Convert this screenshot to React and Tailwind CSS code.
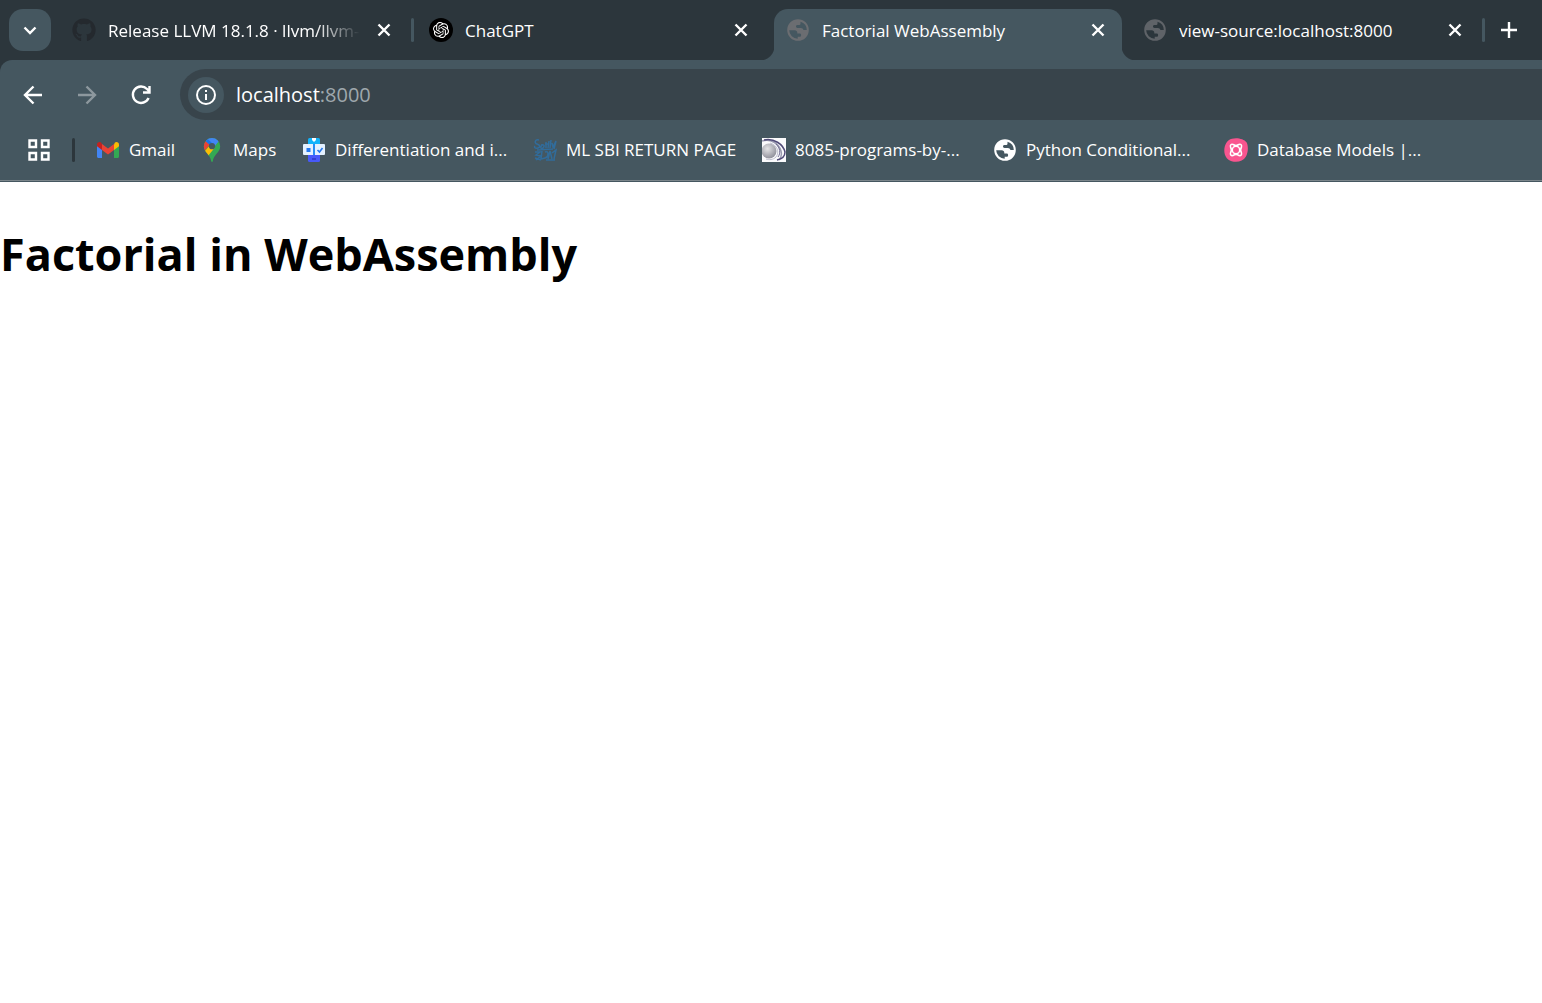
import { FaGithub } from "react-icons/fa";
import { SiOpenai } from "react-icons/si";

function Globe({ className }) {
  return (
    <svg viewBox="0 0 24 24" className={`size-6 shrink-0 ${className}`} aria-hidden="true">
      <path
        fillRule="evenodd"
        d="M12 1.200a10.800 10.800 0 1 0 0 21.600 10.800 10.800 0 0 0 0-21.600zM14.500 3.700a8.800 8.800 0 0 1 6.300 8.300h-3.300c-.5-1.300-1.200-2-2.600-2h-3.400c-.9 0-1.500-.6-1.500-1.400 0-1 .6-1.500 1.600-1.500h1.200c1.100 0 1.700-.7 1.700-1.700zM3.200 12.300h5.500c1.600 0 2.600.9 2.600 2.500v.700h2.200c1.200 0 1.600.7 1.600 1.700 0 1-.6 1.500-1.600 1.500h-1.800v2.100a8.800 8.800 0 0 1-8.500-8.500z"
        fill="currentColor"
      />
    </svg>
  );
}

function Gmail() {
  return (
    <svg viewBox="0 0 24 24" className="size-6 shrink-0" aria-hidden="true">
      <path d="M1 7v11.500c0 .8.700 1.500 1.500 1.500H6V10z" fill="#4285f4" />
      <path d="M23 7v11.500c0 .8-.7 1.500-1.500 1.500H18V10z" fill="#34a853" />
      <path d="M18 6.500V12l5-3.700V6.500c0-2.200-2.400-3.200-4.100-2z" fill="#fbbc04" />
      <path d="M6 12V6l6 4.500L18 6v6l-6 4.500z" fill="#ea4335" />
      <path d="M1 6.500v1.800L6 12V6.300L5.100 4.500C3.400 3.200 1 4.300 1 6.500z" fill="#c5221f" />
    </svg>
  );
}

function Maps() {
  return (
    <svg viewBox="0 0 24 24" className="size-6 shrink-0" aria-hidden="true">
      <clipPath id="pin">
        <path d="M12 0a8.200 8.200 0 0 0-8.200 8.200c0 6.200 6.700 8.300 7.400 15 .1 1 1.500 1 1.600 0 .7-6.700 7.400-8.800 7.400-15A8.200 8.200 0 0 0 12 0z" />
      </clipPath>
      <g clipPath="url(#pin)">
        <path d="M0 0h24v24H0z" fill="#34a853" />
        <path d="M5.700 3 10 6.500 4 13.500 1 8z" fill="#ea4335" />
        <path d="M5.500 3 9-1h6l4 4-5 6-4-2.500z" fill="#4285f4" />
        <path d="M5.500 3 7.700 1 12 5l-2.200 2z" fill="#1a73e8" />
        <path d="M4 14 9.700 7.500 14.500 10 8 18z" fill="#fbbc04" />
      </g>
      <circle cx="12" cy="8.200" r="3.100" fill="#455760" />
    </svg>
  );
}

function Robot() {
  return (
    <svg viewBox="0 0 24 24" className="size-6 shrink-0" aria-hidden="true">
      <rect x="6" y="0" width="12" height="8" rx="1.500" fill="#12b4fb" />
      <rect x="6" y="15" width="12" height="9" rx="1.500" fill="#4759fa" />
      <path d="M10 0h4v2l-2 2-2-2z" fill="#fff" />
      <rect x="1" y="6" width="22" height="11" rx="1" fill="#e4f1ff" />
      <path d="M11 6h2v11h-2z" fill="#288df5" />
      <rect x="4.500" y="10" width="4" height="4" fill="#2478ef" />
      <path d="m15.500 12 2 2 3-4" fill="none" stroke="#2478ef" strokeWidth="1.600" />
      <path d="M10 20h4v2h-4z" fill="#343fd4" />
    </svg>
  );
}

function Scribble() {
  return (
    <svg viewBox="0 0 24 24" className="size-6 shrink-0" fill="none" stroke="#316c9b" strokeWidth="1.500" aria-hidden="true">
      <path d="M6 2C2 1 1 5 4 6s4 3 1 4-4-1-3-2M8 7c3-1 4 1 2 3s-3-1-1-3M13 4v6M12 6h3M16 3l-1 7M18 2l-1 8M19 5l1 4 3-6-2 8M2 14h5l-4 3 5 1-5 4M9 13l-1 8 4-1M12 14c4-2 4 5 0 6M15 21l2-8 2 8M19 15l4-3-2 9M2 20l6 2M4 12l16-1M13 22h9" />
    </svg>
  );
}

function Rings() {
  return (
    <svg viewBox="0 0 24 24" className="size-6 shrink-0" aria-hidden="true">
      <defs>
        <radialGradient id="orb" cx=".4" cy=".35" r=".7">
          <stop offset="0" stopColor="#e4e4e6" />
          <stop offset="1" stopColor="#8d8d98" />
        </radialGradient>
      </defs>
      <path d="M0 0h24v24H0z" fill="#fafafc" />
      <circle cx="7" cy="13" r="7.500" fill="url(#orb)" />
      <g fill="none">
        <path d="M0 3c9-3 17 3 19 10 1 4 0 7-2 9" stroke="#9a9ab0" strokeWidth="1.500" />
        <path d="M2 2c10-2 19 4 21 12 0 4-3 7-8 8" stroke="#514b78" strokeWidth="1.500" />
        <path d="M8 5c7 2 10 9 6 14-3 3-7 3-10 2" stroke="#c0c0cf" />
        <path d="M14 6c4 4 5 9 2 13" stroke="#6f6b91" />
      </g>
    </svg>
  );
}

function Blossom() {
  return (
    <svg viewBox="0 0 24 24" className="size-6 shrink-0" aria-hidden="true">
      <path d="M8 .8c5-1.500 12 .2 14.500 3.500 2 3.500 1.800 10-.7 14.500-2.300 4-7.300 5.600-12 4.900C4 23 .3 18.500.3 12.700.3 7 3 2 8 .8z" fill="#f9558f" />
      <g fill="none" stroke="#fff" strokeWidth="1.500">
        <circle cx="12" cy="12" r="3.700" />
        <path d="M9 6.500c2 1.200 4 1.200 6 0 1.800-.6 3 .7 2.500 2.500-1.200 2-1.200 4 0 6 .5 1.800-.7 3-2.500 2.500-2-1.200-4-1.200-6 0-1.800.5-3-.7-2.500-2.500 1.200-2 1.200-4 0-6C6 7.200 7.200 5.900 9 6.500z" />
      </g>
    </svg>
  );
}

function Stroke({ d, className, width = 2 }) {
  return (
    <svg viewBox="0 0 24 24" className={`size-6 shrink-0 ${className || ""}`} fill="none" stroke="currentColor" strokeWidth={width} aria-hidden="true">
      <path d={d} />
    </svg>
  );
}

const tabs = [
  { title: "Release LLVM 18.1.8 · llvm/llvm-", icon: <FaGithub className="size-6 shrink-0 text-[#24292e]" />, fade: true, divider: true },
  {
    title: "ChatGPT",
    icon: (
      <span className="flex size-6 shrink-0 items-center justify-center rounded-full bg-black text-white">
        <SiOpenai className="size-4" />
      </span>
    ),
  },
  { title: "Factorial WebAssembly", icon: <Globe className="text-[#6b6d71]" />, active: true },
  { title: "view-source:localhost:8000", icon: <Globe className="text-[#5f6368]" />, divider: true },
];

const bookmarks = [
  { title: "Gmail", icon: <Gmail />, width: "w-[104px]" },
  { title: "Maps", icon: <Maps />, width: "w-[102px]" },
  { title: "Differentiation and i...", icon: <Robot />, width: "w-[231px]" },
  { title: "ML SBI RETURN PAGE", icon: <Scribble />, width: "w-[229px]" },
  { title: "8085-programs-by-...", icon: <Rings />, width: "w-[231px]" },
  { title: "Python Conditional...", icon: <Globe className="text-white" />, width: "w-[231px]" },
  { title: "Database Models |...", icon: <Blossom />, width: "w-[231px]" },
];

function Tab({ title, icon, active, fade, divider }) {
  return (
    <div className={`relative mr-[9px] flex h-[51px] w-[348px] min-w-0 items-center gap-3 px-3 pb-[9px] ${active ? "rounded-t-[14px] bg-[#455760]" : ""}`}>
      {active && (
        <>
          <span className="absolute bottom-0 -left-3.5 size-3.5 bg-[radial-gradient(circle_at_0_0,transparent_14px,#455760_15px)]" />
          <span className="absolute -right-3.5 bottom-0 size-3.5 bg-[radial-gradient(circle_at_100%_0,transparent_14px,#455760_15px)]" />
        </>
      )}
      <button type="button" role="tab" aria-selected={!!active} className="flex min-w-0 flex-1 items-center gap-3 text-left">
        {icon}
        <span className={`min-w-0 flex-1 overflow-hidden pt-0.5 text-[17px] leading-6 whitespace-nowrap ${fade ? "[mask-image:linear-gradient(to_right,black_82%,transparent)]" : ""}`}>{title}</span>
      </button>
      <button type="button" aria-label={`Close ${title}`}>
        <Stroke d="M6.500 6.500l11 11M17.500 6.500l-11 11" width={2.4} />
      </button>
      {divider && <span className="absolute top-[9px] -right-1.5 h-6 w-[3px] rounded-sm bg-[#455760]" />}
    </div>
  );
}

export default function App() {
  return (
    <div className="min-h-screen overflow-x-hidden bg-white font-['Open_Sans','Noto_Sans',sans-serif] text-black">
      <header className="bg-[#2c363c] text-white">
        <div className="flex h-[60px] pt-[9px] pl-[9px]">
          <button type="button" aria-label="Search tabs" className="mr-[9px] flex size-[42px] shrink-0 items-center justify-center rounded-[14px] bg-[#455760]">
            <Stroke d="M6.500 9.500l5.500 5.500 5.500-5.500" width={2.4} />
          </button>
          <div role="tablist" className="flex min-w-0">
            {tabs.map((tab) => (
              <Tab key={tab.title} {...tab} />
            ))}
          </div>
          <button type="button" aria-label="New tab" className="ml-[9px] h-[42px] shrink-0">
            <Stroke d="M12 4v16M4 12h16" width={2.4} />
          </button>
        </div>
        <div className="rounded-tl-xl bg-[#455760]">
          <nav className="flex h-[69px] items-center pl-[21px]">
            <button type="button" aria-label="Back" className="mr-[30px]">
              <Stroke d="M21 12H4M12.500 3.500L4 12l8.500 8.500" width={2.4} />
            </button>
            <button type="button" aria-label="Forward" className="mr-[30px] text-[#8d989e]">
              <Stroke d="M3 12h17M11.500 3.500L20 12l-8.500 8.500" width={2.4} />
            </button>
            <button type="button" aria-label="Reload" className="mr-[27px]">
              <Stroke d="M19.600 15a8.200 8.200 0 1 1-1.600-9l2 2M20.500 3v6.500H14" width={2.4} />
            </button>
            <div className="flex h-[51px] flex-1 items-center rounded-l-full bg-[#38444b] pl-2">
              <button type="button" aria-label="View site information" className="flex size-9 items-center justify-center rounded-full bg-[#455760]">
                <svg viewBox="0 0 24 24" className="size-6" aria-hidden="true">
                  <circle cx="12" cy="12" r="9" fill="none" stroke="currentColor" strokeWidth="2" />
                  <path d="M11 7h2v2h-2zM11 11h2v6h-2z" fill="currentColor" />
                </svg>
              </button>
              <div role="textbox" aria-label="Address" contentEditable suppressContentEditableWarning className="ml-3 flex-1 text-xl text-[#9fa8ad] outline-none">
                <span className="text-white">localhost</span>:8000
              </div>
            </div>
          </nav>
          <nav aria-label="Bookmarks" className="flex h-[51px] items-center overflow-hidden pb-[9px] pl-[27px]">
            <button type="button" aria-label="Apps" className="mr-[21px]">
              <Stroke d="M2.500 2.500h6.500v6.500h-6.500zM15 2.500h6.500v6.500h-6.500zM2.500 15h6.500v6.500h-6.500zM15 15h6.500v6.500h-6.500z" width={2.4} />
            </button>
            <span className="mr-[21px] h-6 w-[3px] shrink-0 rounded-sm bg-[#2c363c]" />
            {bookmarks.map(({ title, icon, width }) => (
              <a key={title} href="#" className={`flex shrink-0 items-center gap-[9px] text-[17px] leading-6 whitespace-nowrap ${width}`}>
                {icon}
                {title}
              </a>
            ))}
          </nav>
          <div className="h-0.5 border-t border-[#7b868b]" />
        </div>
      </header>
      <main>
        <h1 className="pt-10 text-[45px] leading-[64px] font-bold">Factorial in WebAssembly</h1>
      </main>
    </div>
  );
}
